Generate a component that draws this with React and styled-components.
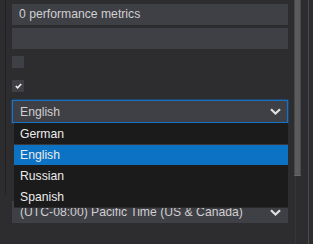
import React from 'react'
import styled, { createGlobalStyle } from 'styled-components'

const GlobalStyle = createGlobalStyle`
    body {
        margin: 0;
        background: #2d2d30;
        font-family: "Liberation Sans", Arial, sans-serif;
    }
`

const Page = styled.div`
    display: flex;
    width: 313px;
    height: 244px;
    background: #2d2d30;
    overflow: hidden;
`
const Gutter = styled.div`
    width: 5px;
    flex: none;
`
const Rule = styled.div`
    width: 1px;
    height: 195px;
    flex: none;
    background: #222224;
`
const Form = styled.div`
    display: flex;
    flex-direction: column;
    width: 276px;
    padding: 4px 0 0 6px;
    flex: none;
`
const Input = styled.div`
    height: 21px;
    margin-top: ${p => p.$mt || 0}px;
    background: #3f3f46;
    color: #d0d0d0;
    font-size: 12.2px;
    line-height: 21px;
    padding-left: 7px;
    white-space: nowrap;
`
const Check = styled.div`
    width: 12px;
    height: 12px;
    margin-top: ${p => p.$mt || 0}px;
    background: #3f3f46;
    display: flex;
    align-items: center;
    justify-content: center;
`
const SelectWrap = styled.div`
    position: relative;
    margin-top: ${p => p.$mt || 0}px;
`
const Select = styled.div`
    box-sizing: border-box;
    height: ${p => p.$h || 23}px;
    display: flex;
    align-items: center;
    justify-content: space-between;
    padding: 0 6px 0 7px;
    background: #3f3f46;
    color: #d0d0d0;
    font-size: 12.2px;
    border: 1px solid ${p => (p.$open ? '#1673c5' : 'transparent')};
    box-shadow: ${p => (p.$open ? '0 0 2px #1673c5' : 'none')};
    white-space: nowrap;
`
const List = styled.div`
    position: absolute;
    top: 100%;
    left: 2px;
    right: 0;
    z-index: 2;
    background: #1b1b1c;
    border-bottom: 1px solid #2a2a2c;
`
const Option = styled.div`
    height: 20px;
    line-height: 20px;
    padding-left: 6px;
    font-size: 12.2px;
    color: #ececec;
    background: ${p => (p.$active ? '#0b72c4' : 'transparent')};
    border-top: 1px solid ${p => (p.$active ? '#3a3a3c' : 'transparent')};
`
const Filler = styled.div`
    height: 78px;
`
const Spacer = styled.div`
    width: 6px;
    flex: none;
`
const Scroll = styled.div`
    position: relative;
    width: 14px;
    flex: none;
    border-right: 1px solid #4c4c4e;
    background: #2d2d30;
`
const Thumb = styled.div`
    width: 7px;
    height: 176px;
    box-sizing: border-box;
    background: #5b5b5d;
    border-left: 1px solid #48484a;
    border-right: 1px solid #48484a;
    border-bottom: 1px solid #68686a;
`
const Track = styled.div`
    width: 1px;
    height: 68px;
    margin-left: 1px;
    background: #353537;
`

const Chevron = () => (
    <svg width="11" height="7" viewBox="0 0 11 7">
        <path d="M1 1.2 L5.5 5.5 L10 1.2" fill="none" stroke="#e0e0e0" strokeWidth="2.2" />
    </svg>
)

const Tick = () => (
    <svg width="7" height="6" viewBox="0 0 7 6">
        <path d="M0.8 3 L2.6 4.8 L6.2 1" fill="none" stroke="#ececec" strokeWidth="1.7" />
    </svg>
)

const languages = ['German', 'English', 'Russian', 'Spanish']

const App = () => {
    return (
        <Page>
            <GlobalStyle />
            <Gutter />
            <Rule />
            <Form>
                <Input>0 performance metrics</Input>
                <Input $mt={3} />
                <Check $mt={7} />
                <Check $mt={12}><Tick /></Check>
                <SelectWrap $mt={8}>
                    <Select $open>
                        <span>English</span>
                        <Chevron />
                    </Select>
                    <List>
                        {languages.map(l => (
                            <Option key={l} $active={l === 'English'}>{l}</Option>
                        ))}
                    </List>
                </SelectWrap>
                <Filler />
                <Select $h={22}>
                    <span>(UTC-08:00) Pacific Time (US &amp; Canada)</span>
                    <Chevron />
                </Select>
            </Form>
            <Spacer />
            <Scroll>
                <Thumb />
                <Track />
            </Scroll>
        </Page>
    )
}

export default App
